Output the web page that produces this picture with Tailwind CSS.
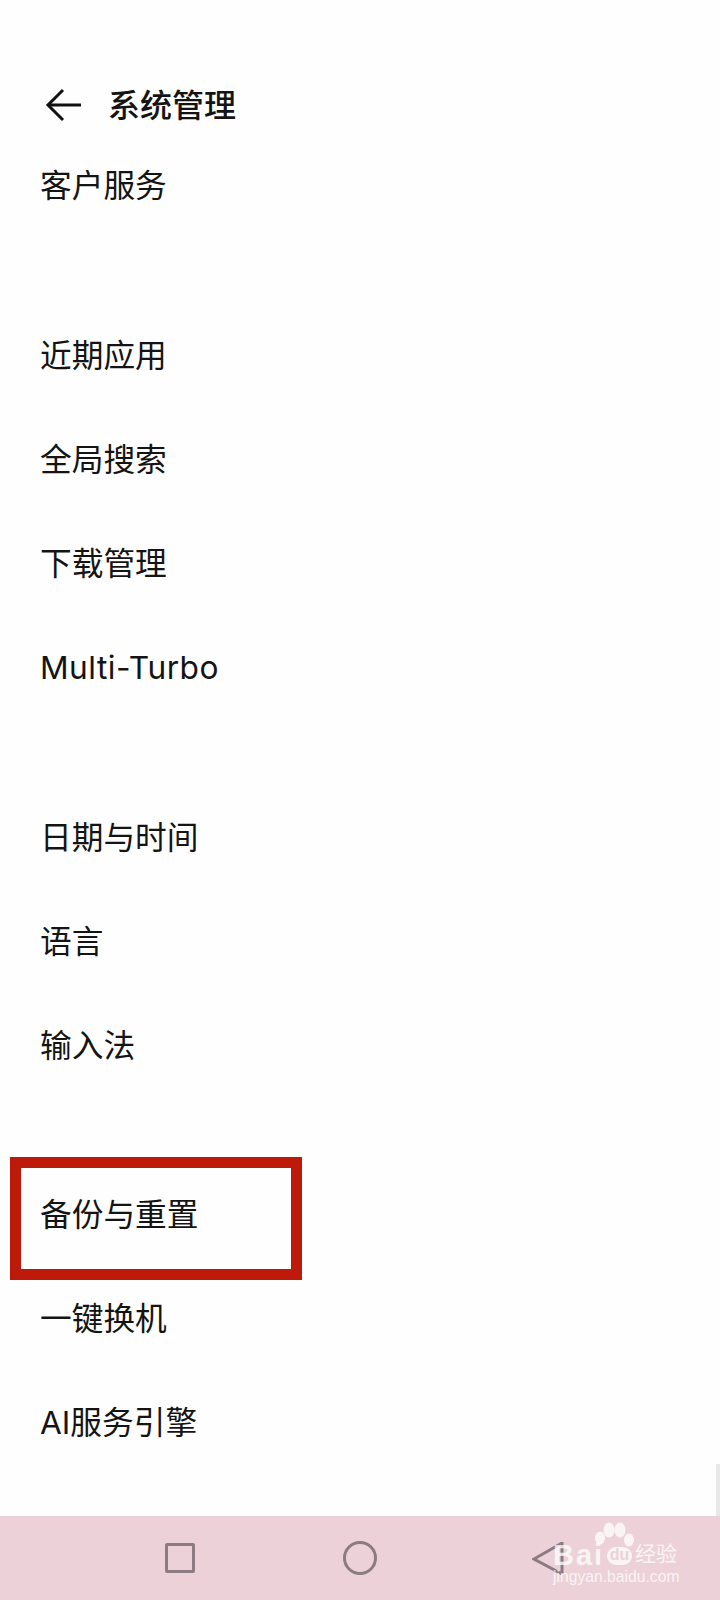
<!DOCTYPE html>
<html lang="zh-CN">
<head>
    <meta charset="UTF-8">
    <meta name="viewport" content="width=device-width, initial-scale=1.0">
    <title>系统管理</title>
    <script src="https://cdn.jsdelivr.net/npm/@tailwindcss/browser@4"></script>
</head>
<body class="bg-[#fefefe] font-['Inter','Noto_Sans_CJK_SC',sans-serif] text-[#141414]">
    <div class="relative w-[720px] h-[1600px] overflow-hidden flex flex-col">
        <!-- Header -->
        <div class="h-[134px] pt-[80px] pl-[45px] flex items-start gap-[27px]">
            <svg class="w-[36px] h-[50px]" viewBox="0 0 36 50" fill="none" stroke="#111" stroke-width="3">
                <path d="M18 10 L3 25 L18 40" />
                <path d="M3 25 H36" />
            </svg>
            <h1 class="text-[32px] leading-[50px] font-medium mt-[1px]">系统管理</h1>
        </div>

        <!-- Settings list -->
        <div class="flex flex-col text-[31.7px] pl-[40px]">
            <div class="h-[104px] flex items-center">客户服务</div>

            <div class="h-[66px]"></div>
            <div class="h-[104px] flex items-center">近期应用</div>
            <div class="h-[104px] flex items-center">全局搜索</div>
            <div class="h-[104px] flex items-center">下载管理</div>
            <div class="h-[104px] flex items-center tracking-[0.5px]">Multi-Turbo</div>

            <div class="h-[66px]"></div>
            <div class="h-[104px] flex items-center">日期与时间</div>
            <div class="h-[104px] flex items-center">语言</div>
            <div class="h-[104px] flex items-center">输入法</div>

            <div class="h-[65px]"></div>
            <div class="h-[104px] flex items-center">备份与重置</div>
            <div class="h-[104px] flex items-center">一键换机</div>
            <div class="h-[104px] flex items-center">AI服务引擎</div>
        </div>

        <!-- Red annotation box -->
        <div class="absolute left-[10px] top-[1157px] w-[292px] h-[123px] border-[11px] border-[#bd1a0c]"></div>

        <!-- Scrollbar -->
        <div class="absolute right-0 top-[1464px] w-[4px] h-[52px] bg-[#e8e8e8]"></div>

        <!-- Nav bar -->
        <div class="absolute left-0 right-0 bottom-0 h-[84px] bg-[#ecd2d8] flex items-start pt-[25px]">
            <div class="ml-[165px] mt-[2px] w-[30px] h-[30px] border-[3px] border-[#8c7b82] rounded-[2px]"></div>
            <div class="ml-[148px] w-[34px] h-[34px] border-[3px] border-[#8c7b82] rounded-full"></div>
            <svg class="ml-[155px] w-[32px] h-[36px]" viewBox="0 0 32 36" fill="none" stroke="#8c7b82" stroke-width="3">
                <path d="M30 1 V33 M30 2 L2 18 L30 33" />
            </svg>
        </div>

        <!-- Baidu watermark -->
        <div class="absolute left-[553px] top-[1520px] w-[130px] h-[64px] text-white/75 font-['Liberation_Sans',sans-serif]">
            <svg class="absolute left-[40px] top-0 w-[44px] h-[27px]" viewBox="0 0 44 27" fill="#fff" fill-opacity="0.75">
                <ellipse cx="7" cy="18" rx="5" ry="6.5" />
                <ellipse cx="16" cy="10" rx="5.5" ry="7.5" />
                <ellipse cx="27" cy="10" rx="5.5" ry="7.5" />
                <ellipse cx="36" cy="20" rx="5" ry="6.5" />
            </svg>
            <div class="absolute left-0 top-[20px] text-[29px] leading-[30px] font-bold tracking-[2px]">Bai</div>
            <div class="absolute left-[54px] top-[27px] w-[25px] h-[18px] rounded-[9px] bg-white/75 text-[#ecd2d8] text-[16px] leading-[16px] font-bold text-center">du</div>
            <div class="absolute left-[82px] top-[20px] text-[21px] leading-[24px] font-['Noto_Sans_CJK_SC',sans-serif]">经验</div>
            <div class="absolute left-0 top-[49px] text-[15.7px] leading-[16px]">jingyan.baidu.com</div>
        </div>
    </div>
</body>
</html>
